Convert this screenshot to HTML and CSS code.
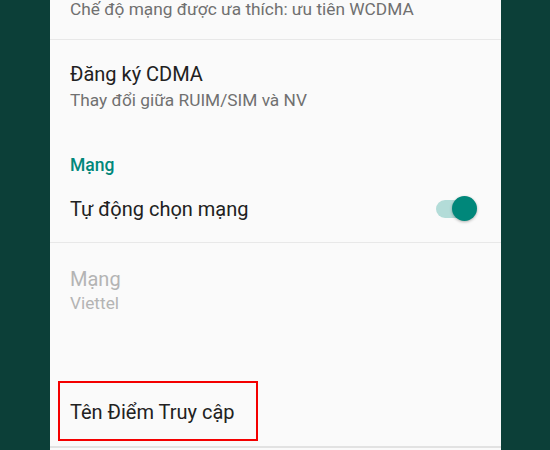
FILE: index.html
```html
<!DOCTYPE html>
<html lang="vi">
<head>
<meta charset="utf-8">
<title>Cài đặt mạng di động</title>
<link rel="stylesheet" href="styles.css">
</head>
<body>
  <div class="screen">
    <main class="panel">
      <div class="pref pref-top">
        <div class="summary">Chế độ mạng được ưa thích: ưu tiên WCDMA</div>
      </div>

      <div class="pref pref-plain">
        <div class="title">Đăng ký CDMA</div>
        <div class="summary">Thay đổi giữa RUIM/SIM và NV</div>
      </div>

      <div class="category">Mạng</div>

      <div class="pref pref-switch">
        <div class="title">Tự động chọn mạng</div>
        <span class="switch is-on" role="switch" aria-checked="true">
          <span class="switch-track"></span>
          <span class="switch-thumb"></span>
        </span>
      </div>

      <div class="pref pref-disabled">
        <div class="title">Mạng</div>
        <div class="summary">Viettel</div>
      </div>

      <div class="pref pref-apn">
        <div class="title">Tên Điểm Truy cập</div>
        <span class="highlight"></span>
      </div>
    </main>
  </div>
</body>
</html>
```

FILE: styles.css
```css
* {
  box-sizing: border-box;
}

html,
body {
  margin: 0;
  padding: 0;
  height: 100%;
}

body {
  background: #0c3f38;
  font-family: Roboto, "Noto Sans", "Liberation Sans", sans-serif;
  overflow: hidden;
}

.screen {
  display: flex;
  justify-content: flex-start;
  height: 450px;
  padding-left: 50px;
}

.panel {
  width: 451px;
  height: 450px;
  background: #fafafa;
  display: flex;
  flex-direction: column;
  overflow: hidden;
}

.pref {
  padding: 0 24px 0 20px;
}

.title {
  font-size: 20px;
  line-height: 26px;
  color: #212121;
}

.summary {
  font-size: 17.3px;
  line-height: 22px;
  color: #707070;
}

/* first row is scrolled so only its summary shows */
.pref-top {
  height: 40px;
  border-bottom: 1px solid #e8e8e8;
}

.pref-top .summary {
  margin-top: -2px;
}

.pref-plain {
  padding-top: 21px;
  padding-bottom: 21px;
}

.pref-plain .summary {
  margin-top: 2px;
}

.category {
  padding: 22px 20px 0;
  font-size: 17.5px;
  line-height: 22px;
  font-weight: 500;
  color: #00877a;
}

.pref-switch {
  height: 67px;
  display: flex;
  align-items: center;
  justify-content: space-between;
  border-bottom: 1px solid #e8e8e8;
  padding-bottom: 1px;
}

.switch {
  position: relative;
  width: 41px;
  height: 26px;
  flex: none;
}

.switch-track {
  position: absolute;
  left: 0;
  top: 4px;
  width: 36px;
  height: 18px;
  border-radius: 9px;
  background: #b3dcd8;
}

.switch-thumb {
  position: absolute;
  right: 0;
  top: 0;
  width: 25px;
  height: 25px;
  border-radius: 50%;
  background: #00877a;
  box-shadow: 0 1px 3px rgba(0, 0, 0, 0.3);
}

.pref-disabled {
  padding-top: 23px;
}

.pref-disabled .title,
.pref-disabled .summary {
  color: #b4b4b4;
}

.pref-apn {
  position: relative;
  margin-top: 66px;
  height: 68px;
  display: flex;
  align-items: center;
  border-bottom: 2px solid #e2e2e2;
  padding-bottom: 2px;
}

/* red annotation frame around the access point entry */
.highlight {
  position: absolute;
  left: 8px;
  top: 1px;
  width: 200px;
  height: 60px;
  border: 2px solid #f40000;
}
```
